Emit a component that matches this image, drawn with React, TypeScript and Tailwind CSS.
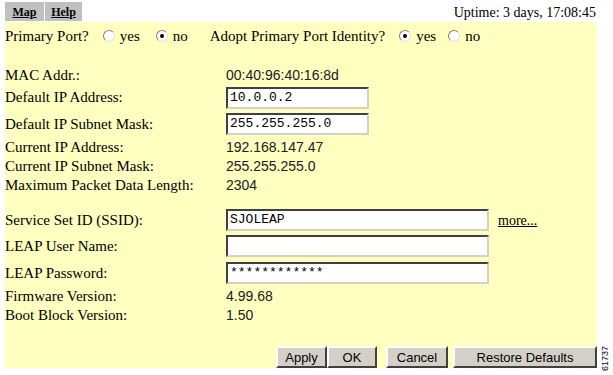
import React from "react";

const serif = { fontFamily: '"Liberation Serif", "Times New Roman", serif' };

function Radio({ checked }: { checked?: boolean }) {
  return (
    <span className="inline-flex w-[12px] h-[12px] rounded-full bg-white border border-[#808080] border-b-[#e0e0e0] border-r-[#e0e0e0] items-center justify-center mr-[5px]">
      {checked && <span className="w-[4px] h-[4px] rounded-full bg-black" />}
    </span>
  );
}

function TextBox({ value, w }: { value: string; w: string }) {
  return (
    <div
      className={`${w} h-[22px] bg-white border-2 border-t-[#404040] border-l-[#404040] border-b-[#d4d0c8] border-r-[#d4d0c8] flex items-center px-[2px] text-[13px] text-black font-['Liberation_Mono',monospace]`}
    >
      {value}
    </div>
  );
}

function Row({ label, h, children }: { label: string; h: string; children?: React.ReactNode }) {
  return (
    <div className={`flex items-center ${h}`}>
      <div className="w-[221px] text-[15px] text-black">{label}</div>
      <div className="flex items-center text-[14px] text-[#202020] font-['Liberation_Sans',Arial,sans-serif]">
        {children}
      </div>
    </div>
  );
}

function Btn({ label, w }: { label: string; w: string }) {
  return (
    <button
      className={`${w} h-[22px] bg-[#d4d0c8] border-2 border-t-[#ffffff] border-l-[#ffffff] border-b-[#404040] border-r-[#404040] text-[13px] text-black font-['Liberation_Sans',Arial,sans-serif]`}
    >
      {label}
    </button>
  );
}

export default function App() {
  return (
    <div className="w-[613px] h-[375px] bg-white relative overflow-hidden" style={serif}>
      {/* top bar */}
      <div className="flex items-center h-[22px] pl-[5px] pr-[17px]">
        <div className="flex gap-[1px] self-start mt-[2px]">
          <span className="w-[39px] h-[19px] bg-[#c0c0c0] flex items-center justify-center text-[12px] font-bold underline">Map</span>
          <span className="w-[37px] h-[19px] bg-[#c0c0c0] flex items-center justify-center text-[12px] font-bold underline">Help</span>
        </div>
        <div className="ml-auto text-[14px] text-black mt-[3px]">Uptime: 3 days, 17:08:45</div>
      </div>

      {/* yellow panel */}
      <div className="ml-[5px] w-[592px] h-[346px] bg-[#ffffc0] flex flex-col">
        <div className="flex items-center h-[28px] text-[15px] text-black">
          <span className="mr-[14px]">Primary Port?</span>
          <Radio />
          <span className="mr-[16px]">yes</span>
          <Radio checked />
          <span className="mr-[22px]">no</span>
          <span className="mr-[14px]">Adopt Primary Port Identity?</span>
          <Radio checked />
          <span className="mr-[12px]">yes</span>
          <Radio />
          <span>no</span>
        </div>
        <div className="h-[16px]" />
        <Row label="MAC Addr.:" h="h-[19px]">00:40:96:40:16:8d</Row>
        <Row label="Default IP Address:" h="h-[25px]">
          <TextBox value="10.0.0.2" w="w-[143px]" />
        </Row>
        <Row label="Default IP Subnet Mask:" h="h-[28px]">
          <TextBox value="255.255.255.0" w="w-[143px]" />
        </Row>
        <Row label="Current IP Address:" h="h-[19px]">192.168.147.47</Row>
        <Row label="Current IP Subnet Mask:" h="h-[19px]">255.255.255.0</Row>
        <Row label="Maximum Packet Data Length:" h="h-[18px]">2304</Row>
        <div className="h-[13px]" />
        <Row label="Service Set ID (SSID):" h="h-[26px]">
          <TextBox value="SJOLEAP" w="w-[263px]" />
          <span className="ml-[9px] text-[14px] underline text-black" style={serif}>more...</span>
        </Row>
        <Row label="LEAP User Name:" h="h-[26px]">
          <TextBox value="" w="w-[263px]" />
        </Row>
        <Row label="LEAP Password:" h="h-[28px]">
          <TextBox value="************" w="w-[263px]" />
        </Row>
        <Row label="Firmware Version:" h="h-[19px]">4.99.68</Row>
        <Row label="Boot Block Version:" h="h-[19px]">1.50</Row>
        <div className="flex-1" />
        <div className="flex justify-end mb-[0px]">
          <Btn label="Apply" w="w-[51px]" />
          <Btn label="OK" w="w-[50px]" />
          <div className="w-[9px]" />
          <Btn label="Cancel" w="w-[62px]" />
          <div className="w-[5px]" />
          <Btn label="Restore Defaults" w="w-[144px]" />
        </div>
      </div>

      {/* figure number */}
      <div className="absolute right-[3px] bottom-[4px] text-[9px] leading-[10px] text-black [writing-mode:vertical-rl] rotate-180 font-['Liberation_Sans',Arial,sans-serif]">
        61737
      </div>
    </div>
  );
}
